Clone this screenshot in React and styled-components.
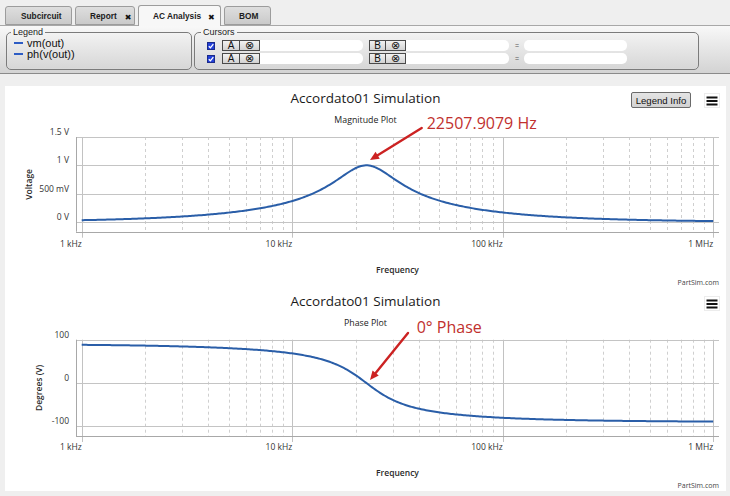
import React from 'react';
import styled, { createGlobalStyle } from 'styled-components';

const GlobalStyle = createGlobalStyle`
  html, body { margin: 0; padding: 0; background: #efefef; }
  body { width: 730px; height: 496px; overflow: hidden; font-family: "Liberation Sans", Arial, sans-serif; }
`;

const Page = styled.div`
  width: 730px;
  height: 496px;
  display: flex;
  flex-direction: column;
  background: #efefef;
`;

/* ---------- tabs ---------- */
const TabBar = styled.div`
  box-sizing: border-box;
  height: 26px;
  display: flex;
  align-items: flex-end;
  gap: 3px;
  padding-left: 5px;
  border-bottom: 1px solid #a8a8a8;
`;

const Tab = styled.div`
  box-sizing: border-box;
  position: relative;
  width: ${p => p.$w}px;
  height: ${p => (p.$active ? 21 : 19)}px;
  margin-bottom: ${p => (p.$active ? -1 : 0)}px;
  padding-left: ${p => p.$pl}px;
  display: flex;
  align-items: center;
  border: 1px solid #9c9c9c;
  border-bottom: ${p => (p.$active ? 'none' : '1px solid #9c9c9c')};
  border-radius: 3px 3px 0 0;
  background: ${p => (p.$active ? '#f7f7f7' : 'linear-gradient(#dedede, #cacaca)')};
  font: bold 8.3px "Liberation Sans", Arial, sans-serif;
  color: #1c1c1c;
  white-space: nowrap;
`;

const Close = styled.span`
  margin-left: ${p => p.$gap}px;
  margin-top: 3px;
  font: 8px "DejaVu Sans", sans-serif;
  color: #111;
`;

/* ---------- toolbar with fieldsets ---------- */
const Toolbar = styled.div`
  box-sizing: border-box;
  height: 48px;
  display: flex;
  gap: 2px;
  padding: 2px 0 0 6px;
  background: linear-gradient(#f8f8f8, #d3d3d3);
  border-bottom: 1px solid #8a8a8a;
`;

const Group = styled.fieldset`
  box-sizing: border-box;
  margin: 0;
  width: ${p => p.$w}px;
  height: 42px;
  padding: 0 0 0 ${p => p.$lp}px;
  border: 1px solid #7b7b7b;
  border-radius: 5px;
  min-width: 0;
  box-shadow: inset 0 0 1px rgba(255,255,255,0.8);
`;

const GroupLabel = styled.legend`
  padding: 0 2px;
  font: 9px/9px "Liberation Sans", Arial, sans-serif;
  color: #222;
`;

const LegendList = styled.div`
  display: flex;
  flex-direction: column;
  padding-left: 3px;
`;

const LegendItem = styled.div`
  height: 11.5px;
  display: flex;
  align-items: center;
  gap: 4px;
  font: 11px "Liberation Sans", Arial, sans-serif;
  color: #111;
`;

const Dash = styled.span`
  width: 9px;
  height: 2px;
  background: #2d5cc4;
`;

const CursorList = styled.div`
  display: flex;
  flex-direction: column;
  gap: 2px;
  padding: 3px 0 0 6px;
`;

const CursorRow = styled.div`
  height: 11px;
  display: flex;
  align-items: center;
`;

const Check = styled.span`
  box-sizing: border-box;
  width: 8px;
  height: 8px;
  margin-right: 7px;
  background: #2340d8;
  border: 1px solid #1a2a8a;
  display: flex;
  align-items: center;
  justify-content: center;
`;

const CBtn = styled.span`
  box-sizing: border-box;
  width: ${p => p.$w}px;
  height: 11px;
  margin-left: ${p => p.$ml || 0}px;
  display: flex;
  align-items: center;
  justify-content: center;
  border: 1px solid #4a4a4a;
  background: linear-gradient(#f2f2f2, #d2d2d2);
  font: ${p => (p.$sym ? '11px/11px "DejaVu Sans", sans-serif' : '10px "Liberation Sans", Arial, sans-serif')};
  color: #111;
`;

const Field = styled.span`
  box-sizing: border-box;
  width: 103px;
  height: 11px;
  background: #fff;
  border-radius: ${p => (p.$round ? '5px' : '0 5px 5px 0')};
`;

const Eq = styled.span`
  width: 14px;
  text-align: center;
  margin-left: 1px;
  font: 7px "Liberation Sans", Arial, sans-serif;
  color: #555;
`;

/* ---------- charts ---------- */
const ChartArea = styled.div`
  margin: 12px 0 0 5px;
  width: 721px;
  height: 405px;
  background: #fff;
  display: flex;
  flex-direction: column;
`;

const Chart = styled.div`
  position: relative;
  height: ${p => p.$h}px;
  display: flex;
  flex-direction: column;
`;

const ChartTitle = styled.div`
  height: 24px;
  text-align: center;
  font: 13.5px/24px "Open Sans", sans-serif;
  color: #1a1a1a;
`;

const ChartSubtitle = styled.div`
  height: 20px;
  text-align: center;
  font: 8.8px/20px "Open Sans", sans-serif;
  color: #222;
`;

const PlotSvg = styled.svg`
  display: block;
  overflow: visible;
  font-family: "Open Sans", sans-serif;
`;

const LegendInfoBtn = styled.div`
  position: absolute;
  top: 6px;
  left: 626px;
  box-sizing: border-box;
  width: 60px;
  height: 16px;
  display: flex;
  align-items: center;
  justify-content: center;
  border: 1px solid #6a6a6a;
  border-radius: 2px;
  background: linear-gradient(#e4e4e4, #d2d2d2);
  font: 9.6px "Liberation Sans", Arial, sans-serif;
  color: #111;
`;

const MenuBtn = styled.div`
  position: absolute;
  top: 7px;
  left: 699px;
  box-sizing: border-box;
  width: 16px;
  height: 15px;
  display: flex;
  align-items: center;
  justify-content: center;
  background: #fff;
  border: 1px solid #ececec;
`;

const Annotation = styled.span`
  position: absolute;
  left: ${p => p.$x}px;
  top: ${p => p.$y}px;
  font: 16px/16px "Open Sans", sans-serif;
  color: #c1302e;
  white-space: nowrap;
`;

const ArrowLayer = styled.svg`
  position: absolute;
  left: 0;
  top: 0;
  pointer-events: none;
`;

/* ---------- data ---------- */
const X0 = 76.7;
const DECADE = 210.5;
const L = 71;
const R = 714;
const xOf = f => X0 + Math.log10(f / 1000) * DECADE;
const F0 = 22507.9079;
const Q = 1.39;
const mag = f => 1 / Math.sqrt(1 + Q * Q * Math.pow(f / F0 - F0 / f, 2));
const phase = f => (Math.atan(Q * (F0 / f - f / F0)) * 180) / Math.PI;

const curvePath = (fn, yOf) => {
  const pts = [];
  for (let i = 0; i <= 400; i++) {
    const f = 1000 * Math.pow(10, (3 * i) / 400);
    pts.push(`${xOf(f).toFixed(2)},${yOf(fn(f)).toFixed(2)}`);
  }
  return 'M' + pts.join('L');
};

const px = v => Math.round(v) + 0.5;

const majors = [1e3, 1e4, 1e5, 1e6];
const majorLabels = ['1 kHz', '10 kHz', '100 kHz', '1 MHz'];
const minors = [];
for (let d = 0; d < 3; d++) for (let k = 2; k <= 9; k++) minors.push(1e3 * Math.pow(10, d) * k);

const magCfg = {
  title: 'Accordato01 Simulation',
  subtitle: 'Magnitude Plot',
  yTitle: 'Voltage',
  yTitleX: 24,
  top: 7,
  bottom: 101.7,
  yOf: v => 92 - v * 56.7,
  ticks: [
    { v: 1.5, l: '1.5 V' },
    { v: 1, l: '1 V' },
    { v: 0.5, l: '500 mV' },
    { v: 0, l: '0 V' },
  ],
  fn: mag,
  legendInfo: true,
  note: { text: '22507.9079 Hz', x: 421.7, y: 29, from: [416.7, 42], to: [365, 74] },
  h: 203,
};

const phaseCfg = {
  title: 'Accordato01 Simulation',
  subtitle: 'Phase Plot',
  yTitle: 'Degrees (V)',
  yTitleX: 34,
  top: 6.7,
  bottom: 103,
  yOf: p => 50 - p * 0.433,
  ticks: [
    { v: 100, l: '100' },
    { v: 0, l: '0' },
    { v: -100, l: '-100' },
  ],
  fn: phase,
  legendInfo: false,
  note: { text: '0° Phase', x: 411.7, y: 30, from: [403, 44], to: [365, 91] },
  h: 202,
};

function Plot({ cfg }) {
  const { yOf, ticks, top, bottom, yTitle, yTitleX, fn } = cfg;
  const mid = (top + bottom) / 2;
  return (
    <PlotSvg width="721" height="159" viewBox="0 0 721 159">
      {minors.map(f => (
        <line key={f} x1={px(xOf(f))} x2={px(xOf(f))} y1={top} y2={bottom}
          stroke="#cfcfcf" strokeWidth="1" strokeDasharray="3,3" />
      ))}
      {majors.map(f => (
        <line key={f} x1={px(xOf(f))} x2={px(xOf(f))} y1={top} y2={bottom + 6}
          stroke="#c2c2c2" strokeWidth="1" />
      ))}
      {ticks.map(t => (
        <line key={t.l} x1={L} x2={R} y1={px(yOf(t.v))} y2={px(yOf(t.v))} stroke="#c4c4c4" strokeWidth="1" />
      ))}
      <line x1={px(L)} x2={px(L)} y1={top} y2={bottom} stroke="#a8a8a8" strokeWidth="1" />
      <line x1={L} x2={R} y1={px(bottom)} y2={px(bottom)} stroke="#a8a8a8" strokeWidth="1" />
      <path d={curvePath(fn, yOf)} fill="none" stroke="#2a5ea8" strokeWidth="2" strokeLinejoin="round" />
      {ticks.map(t => (
        <text key={t.l} x="64" y={yOf(t.v) - 2} textAnchor="end" fontSize="8.5" fill="#333">{t.l}</text>
      ))}
      {majors.map((f, i) => (
        <text key={f} x={xOf(f)} y="117" textAnchor="end" fontSize="8.5" fill="#333">{majorLabels[i]}</text>
      ))}
      <text x={yTitleX} y={mid} transform={`rotate(-90 ${yTitleX} ${mid})`} textAnchor="middle"
        dominantBaseline="central" fontSize="8.5" fontWeight="600" fill="#2a2a2a">{yTitle}</text>
      <text x="392.5" y="143" textAnchor="middle" fontSize="8.5" fontWeight="600" fill="#2a2a2a">Frequency</text>
      <text x="714" y="155" textAnchor="end" fontSize="7" fill="#444">PartSim.com</text>
    </PlotSvg>
  );
}

function Arrow({ from, to }) {
  const [x1, y1] = from;
  const [x2, y2] = to;
  const ang = Math.atan2(y2 - y1, x2 - x1);
  const len = 9;
  const w = 4;
  const bx = x2 - len * Math.cos(ang);
  const by = y2 - len * Math.sin(ang);
  const nx = -Math.sin(ang) * w;
  const ny = Math.cos(ang) * w;
  return (
    <ArrowLayer width="721" height="203" viewBox="0 0 721 203">
      <line x1={x1} y1={y1} x2={bx} y2={by} stroke="#cc2222" strokeWidth="2.4" strokeLinecap="round" />
      <polygon points={`${x2},${y2} ${bx + nx},${by + ny} ${bx - nx},${by - ny}`} fill="#cc2222" />
    </ArrowLayer>
  );
}

function ChartBlock({ cfg }) {
  return (
    <Chart $h={cfg.h}>
      <ChartTitle>{cfg.title}</ChartTitle>
      <ChartSubtitle>{cfg.subtitle}</ChartSubtitle>
      <Plot cfg={cfg} />
      {cfg.legendInfo && <LegendInfoBtn>Legend Info</LegendInfoBtn>}
      <MenuBtn>
        <svg width="12" height="10" viewBox="0 0 12 10">
          <rect x="0.5" y="0.5" width="11" height="2" fill="#111" />
          <rect x="0.5" y="4" width="11" height="2" fill="#111" />
          <rect x="0.5" y="7.5" width="11" height="2" fill="#111" />
        </svg>
      </MenuBtn>
      <Arrow from={cfg.note.from} to={cfg.note.to} />
      <Annotation $x={cfg.note.x} $y={cfg.note.y}>{cfg.note.text}</Annotation>
    </Chart>
  );
}

const CheckMark = () => (
  <svg width="6" height="6" viewBox="0 0 6 6">
    <path d="M0.8 3.2 L2.4 4.8 L5.3 1.2" fill="none" stroke="#fff" strokeWidth="1.3" />
  </svg>
);

function CursorLine() {
  return (
    <CursorRow>
      <Check><CheckMark /></Check>
      <CBtn $w={18}>A</CBtn>
      <CBtn $w={21} $ml={-1} $sym>⊗</CBtn>
      <Field />
      <CBtn $w={17} $ml={6}>B</CBtn>
      <CBtn $w={21} $ml={-1} $sym>⊗</CBtn>
      <Field />
      <Eq>=</Eq>
      <Field $round />
    </CursorRow>
  );
}

export default function App() {
  return (
    <Page>
      <GlobalStyle />
      <TabBar>
        <Tab $w={67} $pl={15}>Subcircuit</Tab>
        <Tab $w={60} $pl={14}>Report<Close $gap={8}>✖</Close></Tab>
        <Tab $w={83} $pl={14} $active>AC Analysis<Close $gap={7}>✖</Close></Tab>
        <Tab $w={47} $pl={14}>BOM</Tab>
      </TabBar>
      <Toolbar>
        <Group $w={186} $lp={4}>
          <GroupLabel>Legend</GroupLabel>
          <LegendList>
            <LegendItem><Dash />vm(out)</LegendItem>
            <LegendItem><Dash />ph(v(out))</LegendItem>
          </LegendList>
        </Group>
        <Group $w={505} $lp={6}>
          <GroupLabel>Cursors</GroupLabel>
          <CursorList>
            <CursorLine />
            <CursorLine />
          </CursorList>
        </Group>
      </Toolbar>
      <ChartArea>
        <ChartBlock cfg={magCfg} />
        <ChartBlock cfg={phaseCfg} />
      </ChartArea>
    </Page>
  );
}
